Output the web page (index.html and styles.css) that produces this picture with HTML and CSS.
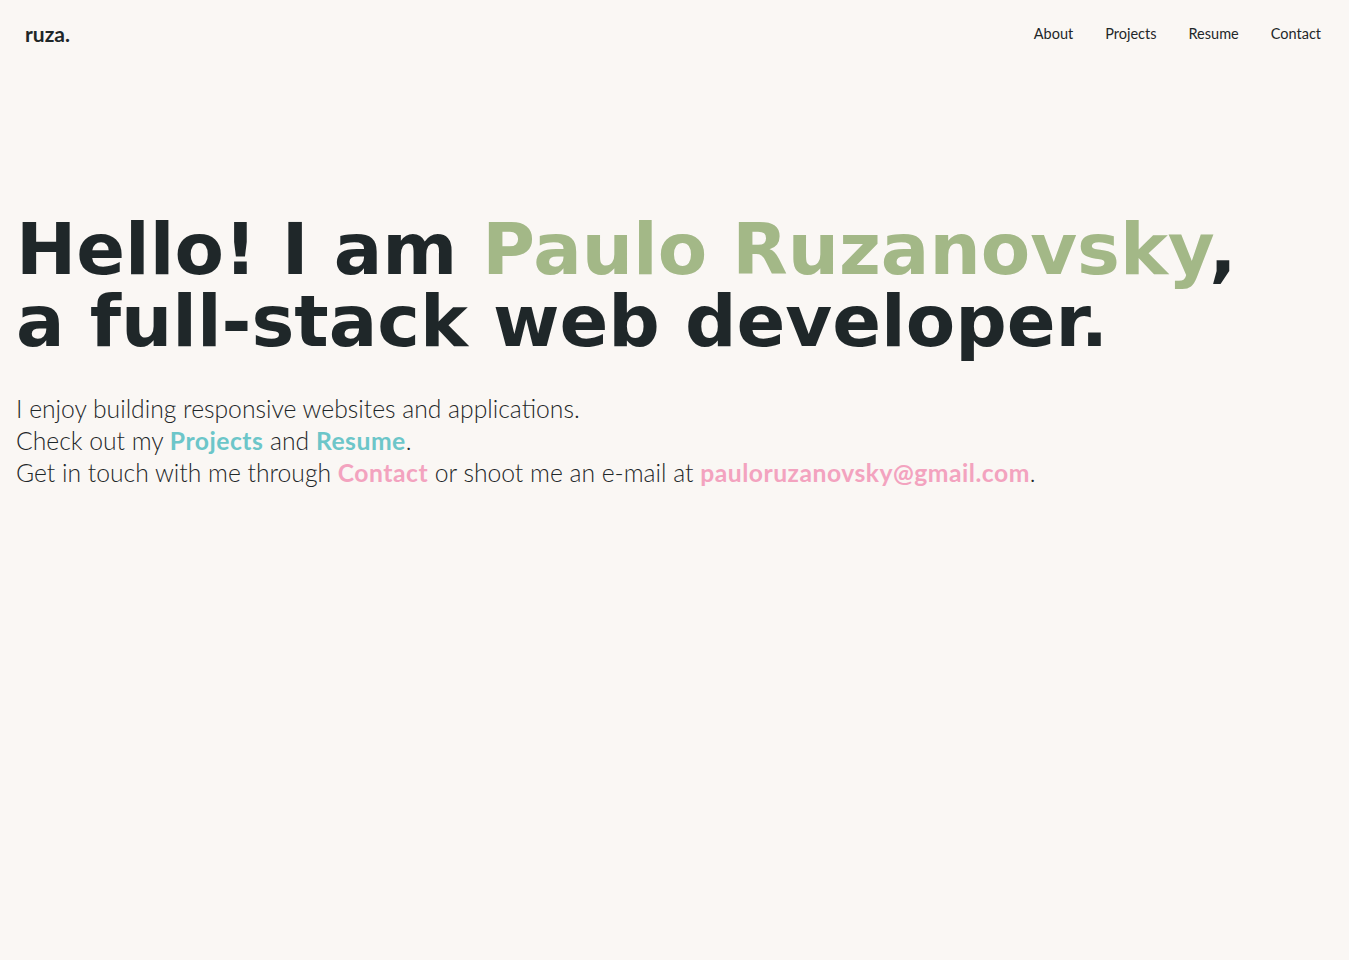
FILE: index.html
```html
<!DOCTYPE html>
<html lang="en">
<head>
<meta charset="utf-8">
<title>ruza.</title>
<link rel="stylesheet" href="styles.css">
</head>
<body>
<header class="topbar">
  <a class="logo" href="#">ruza.</a>
  <nav class="nav">
    <a href="#about">About</a>
    <a href="#projects">Projects</a>
    <a href="#resume">Resume</a>
    <a href="#contact">Contact</a>
  </nav>
</header>
<main>
  <section class="hero">
    <h1 class="title">Hello! I am <span class="name">Paulo Ruzanovsky</span>,<br>a full-stack web developer.</h1>
    <p class="intro">
      I enjoy building responsive websites and applications.<br>
      Check out my <a class="teal" href="#projects">Projects</a> and <a class="teal" href="#resume">Resume</a>.<br>
      Get in touch with me through <a class="pink" href="#contact">Contact</a> or shoot me an e-mail at <a class="pink" href="mailto:pauloruzanovsky@gmail.com">pauloruzanovsky@gmail.com</a>.
    </p>
  </section>
  <section class="rest" id="about"></section>
</main>
</body>
</html>
```
FILE: styles.css
```css
html { background: #faf7f4; }
html::-webkit-scrollbar { width: 6px; }
html::-webkit-scrollbar-track { background: #faf7f4; }
html::-webkit-scrollbar-thumb { background: #bdbdbd; }
body {
  margin: 0;
  background: #faf7f4;
  color: #1f2729;
  font-family: "Lato", "Open Sans", sans-serif;
}
a { text-decoration: none; color: inherit; }
.topbar {
  display: flex;
  justify-content: space-between;
  align-items: center;
  height: 67px;
  padding: 0 28px 0 25px;
}
.logo {
  font-weight: 700;
  font-size: 21px;
  color: #1f2729;
}
.nav { display: flex; gap: 32px; }
.nav a { font-size: 14.5px; color: #1f2729; }
.hero { padding: 146px 16px 0 16px; }
.title {
  margin: 0;
  font-family: "DejaVu Sans", sans-serif;
  font-weight: 700;
  font-size: 72px;
  line-height: 72px;
  color: #1f2729;
}
.name { color: #a3b887; }
.intro {
  margin: 36px 0 0 0;
  font-size: 24.7px;
  font-weight: 300;
  line-height: 32px;
}
.teal { color: #6cc6c9; font-weight: 700; letter-spacing: 0.5px; }
.pink { color: #f3a3bf; font-weight: 700; letter-spacing: 0.5px; }
.rest { height: 6400px; }
```
